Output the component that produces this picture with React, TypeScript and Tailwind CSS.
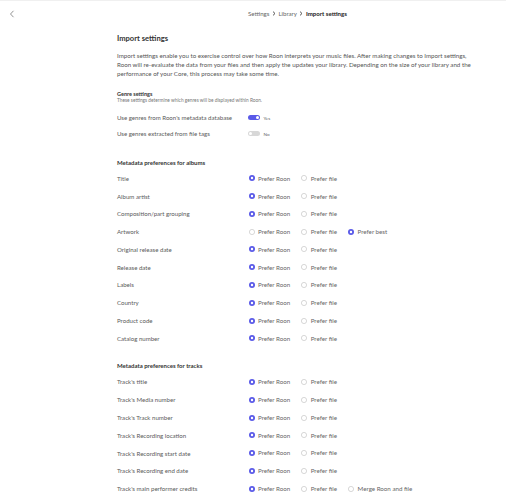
import React from 'react';

type Row = { label: string; options: string[]; selected: number };

const albumRows: Row[] = [
  { label: 'Title', options: ['Prefer Roon', 'Prefer file'], selected: 0 },
  { label: 'Album artist', options: ['Prefer Roon', 'Prefer file'], selected: 0 },
  { label: 'Composition/part grouping', options: ['Prefer Roon', 'Prefer file'], selected: 0 },
  { label: 'Artwork', options: ['Prefer Roon', 'Prefer file', 'Prefer best'], selected: 2 },
  { label: 'Original release date', options: ['Prefer Roon', 'Prefer file'], selected: 0 },
  { label: 'Release date', options: ['Prefer Roon', 'Prefer file'], selected: 0 },
  { label: 'Labels', options: ['Prefer Roon', 'Prefer file'], selected: 0 },
  { label: 'Country', options: ['Prefer Roon', 'Prefer file'], selected: 0 },
  { label: 'Product code', options: ['Prefer Roon', 'Prefer file'], selected: 0 },
  { label: 'Catalog number', options: ['Prefer Roon', 'Prefer file'], selected: 0 },
];

const trackRows: Row[] = [
  { label: "Track's title", options: ['Prefer Roon', 'Prefer file'], selected: 0 },
  { label: "Track's Media number", options: ['Prefer Roon', 'Prefer file'], selected: 0 },
  { label: "Track's Track number", options: ['Prefer Roon', 'Prefer file'], selected: 0 },
  { label: "Track's Recording location", options: ['Prefer Roon', 'Prefer file'], selected: 0 },
  { label: "Track's Recording start date", options: ['Prefer Roon', 'Prefer file'], selected: 0 },
  { label: "Track's Recording end date", options: ['Prefer Roon', 'Prefer file'], selected: 0 },
  { label: "Track's main performer credits", options: ['Prefer Roon', 'Prefer file', 'Merge Roon and file'], selected: 0 },
];

function Radio({ label, checked }: { label: string; checked: boolean }) {
  return (
    <div className="flex items-center gap-[3.5px] mr-[11px]">
      <svg width="6" height="6" viewBox="0 0 6 6" className="shrink-0">
        {checked ? (
          <>
            <circle cx="3" cy="3" r="3" fill="#5a5ae8" />
            <circle cx="3" cy="3" r="1.2" fill="#fff" />
          </>
        ) : (
          <circle cx="3" cy="3" r="2.6" fill="#fff" stroke="#bdbdbd" strokeWidth="0.6" />
        )}
      </svg>
      <span className="text-[6.2px] text-[#666]">{label}</span>
    </div>
  );
}

function PrefRow({ row }: { row: Row }) {
  return (
    <div className="flex items-center h-[17.78px]">
      <div className="w-[131.5px] text-[6.1px] text-[#5a5a5a]">{row.label}</div>
      <div className="flex items-center">
        {row.options.map((o, i) => (
          <Radio key={o} label={o} checked={i === row.selected} />
        ))}
      </div>
    </div>
  );
}

function Toggle({ on, label }: { on: boolean; label: string }) {
  return (
    <div className="flex items-center gap-[3.5px]">
      <span
        className={
          on
            ? 'relative w-[12px] h-[5px] rounded-full bg-[#5a5ae8]'
            : 'relative w-[12px] h-[5px] rounded-full bg-[#d8d8d8]'
        }
      >
        <span
          className={
            on
              ? 'absolute right-[1px] top-[1px] w-[3px] h-[3px] rounded-full bg-white'
              : 'absolute left-[1px] top-[1px] w-[3px] h-[3px] rounded-full bg-white'
          }
        />
      </span>
      <span className="text-[4.6px] text-[#666]">{label}</span>
    </div>
  );
}

function Sep() {
  return (
    <svg width="4" height="5" viewBox="0 0 4 5" className="mx-[2.5px]">
      <path d="M1 0.6 L3 2.5 L1 4.4" fill="none" stroke="#444" strokeWidth="0.9" />
    </svg>
  );
}

export default function App() {
  return (
    <div className="w-[506px] h-[500px] bg-white overflow-hidden font-['Lato','Liberation_Sans',sans-serif] border-t border-[#f0f0f0]">
      <div className="relative h-[26px] flex items-center">
        <svg className="absolute left-[9px] top-[9px]" width="6" height="8" viewBox="0 0 6 8">
          <path d="M4.5 0.8 L1.5 4 L4.5 7.2" fill="none" stroke="#777" strokeWidth="0.8" />
        </svg>
        <div className="flex items-center text-[6.1px] text-[#666] ml-[248px] -mt-[1px]">
          <span>Settings</span>
          <Sep />
          <span>Library</span>
          <Sep />
          <span className="text-[#222] font-bold">Import settings</span>
        </div>
      </div>

      <div className="pl-[117px] pr-[30px]">
        <div className="mt-[6px] h-[12px] flex items-center text-[7.6px] font-bold text-[#333]">
          Import settings
        </div>
        <p className="mt-[5.5px] w-[370px] text-[6.2px] leading-[9px] text-[#555]">
          Import settings enable you to exercise control over how Roon interprets your music files. After making changes to Import settings,
          <br />
          Roon will re-evaluate the data from your files and then apply the updates your library. Depending on the size of your library and the
          <br />
          performance of your Core, this process may take some time.
        </p>

        <div className="mt-[12.5px] h-[8px] flex items-center text-[5.5px] font-bold text-[#333]">Genre settings</div>
        <div className="h-[6px] flex items-center text-[4.8px] text-[#777]">
          These settings determine which genres will be displayed within Roon.
        </div>
        <div className="mt-[6px]">
          <div className="flex items-center h-[16px]">
            <div className="w-[131px] text-[6.1px] text-[#5a5a5a]">Use genres from Roon's metadata database</div>
            <Toggle on label="Yes" />
          </div>
          <div className="flex items-center h-[16px]">
            <div className="w-[131px] text-[6.1px] text-[#5a5a5a]">Use genres extracted from file tags</div>
            <Toggle on={false} label="No" />
          </div>
        </div>

        <div className="mt-[16px] h-[8px] flex items-center text-[6px] font-bold text-[#333]">
          Metadata preferences for albums
        </div>
        <div className="mt-[3.5px]">
          {albumRows.map((r) => (
            <PrefRow key={r.label} row={r} />
          ))}
        </div>

        <div className="mt-[14px] h-[8px] flex items-center text-[6px] font-bold text-[#333]">
          Metadata preferences for tracks
        </div>
        <div className="mt-[4px]">
          {trackRows.map((r) => (
            <PrefRow key={r.label} row={r} />
          ))}
        </div>
      </div>
    </div>
  );
}
